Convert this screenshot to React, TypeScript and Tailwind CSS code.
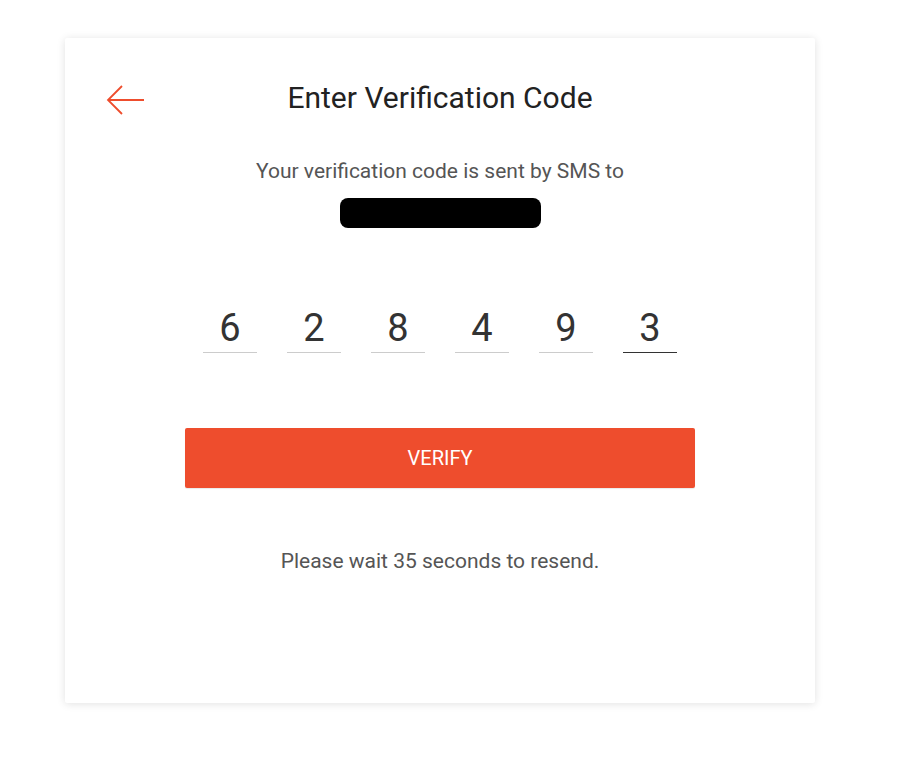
const digits = ["6", "2", "8", "4", "9", "3"];

const App = () => {
  return (
    <div className="min-h-[763px] w-[922px] bg-white pt-[38px] pl-[65px] font-['Roboto',sans-serif]">
      <div className="flex h-[665px] w-[750px] flex-col items-center rounded-[2px] bg-white shadow-[0_1px_8px_rgba(0,0,0,0.12)]">
        {/* header */}
        <div className="relative flex w-full items-center justify-center pt-[44px]">
          <button className="absolute left-[40px] top-[46px] text-[#ee4d2d]">
            <svg width="40" height="32" viewBox="0 0 40 32" fill="none" stroke="currentColor" strokeWidth="1.8">
              <path d="M39 16H3" />
              <path d="M17 2L3 16l14 14" />
            </svg>
          </button>
          <h1 className="text-[30px] leading-[32px] text-[#222]">Enter Verification Code</h1>
        </div>

        <p className="mt-[45px] text-[21px] leading-[24px] text-[#555]">
          Your verification code is sent by SMS to
        </p>
        <div className="mt-[15px] h-[30px] w-[201px] rounded-[8px] bg-black" />

        {/* code inputs */}
        <div className="mt-[79px] flex gap-[30px]">
          {digits.map((d, i) => (
            <div
              key={i}
              className={`flex h-[46px] w-[54px] items-end justify-center border-b pb-[2px] text-[38px] leading-[44px] text-[#333] ${
                i === digits.length - 1 ? "border-[#333]" : "border-[#ccc]"
              }`}
            >
              {d}
            </div>
          ))}
        </div>

        <button className="mt-[75px] h-[60px] w-[510px] rounded-[2px] bg-[#ee4d2d] text-[20px] text-white shadow-[0_1px_1px_rgba(0,0,0,0.09)]">
          VERIFY
        </button>

        <p className="mt-[61px] text-[21px] leading-[24px] text-[#555]">
          Please wait 35 seconds to resend.
        </p>
      </div>
    </div>
  );
};

export default App;
